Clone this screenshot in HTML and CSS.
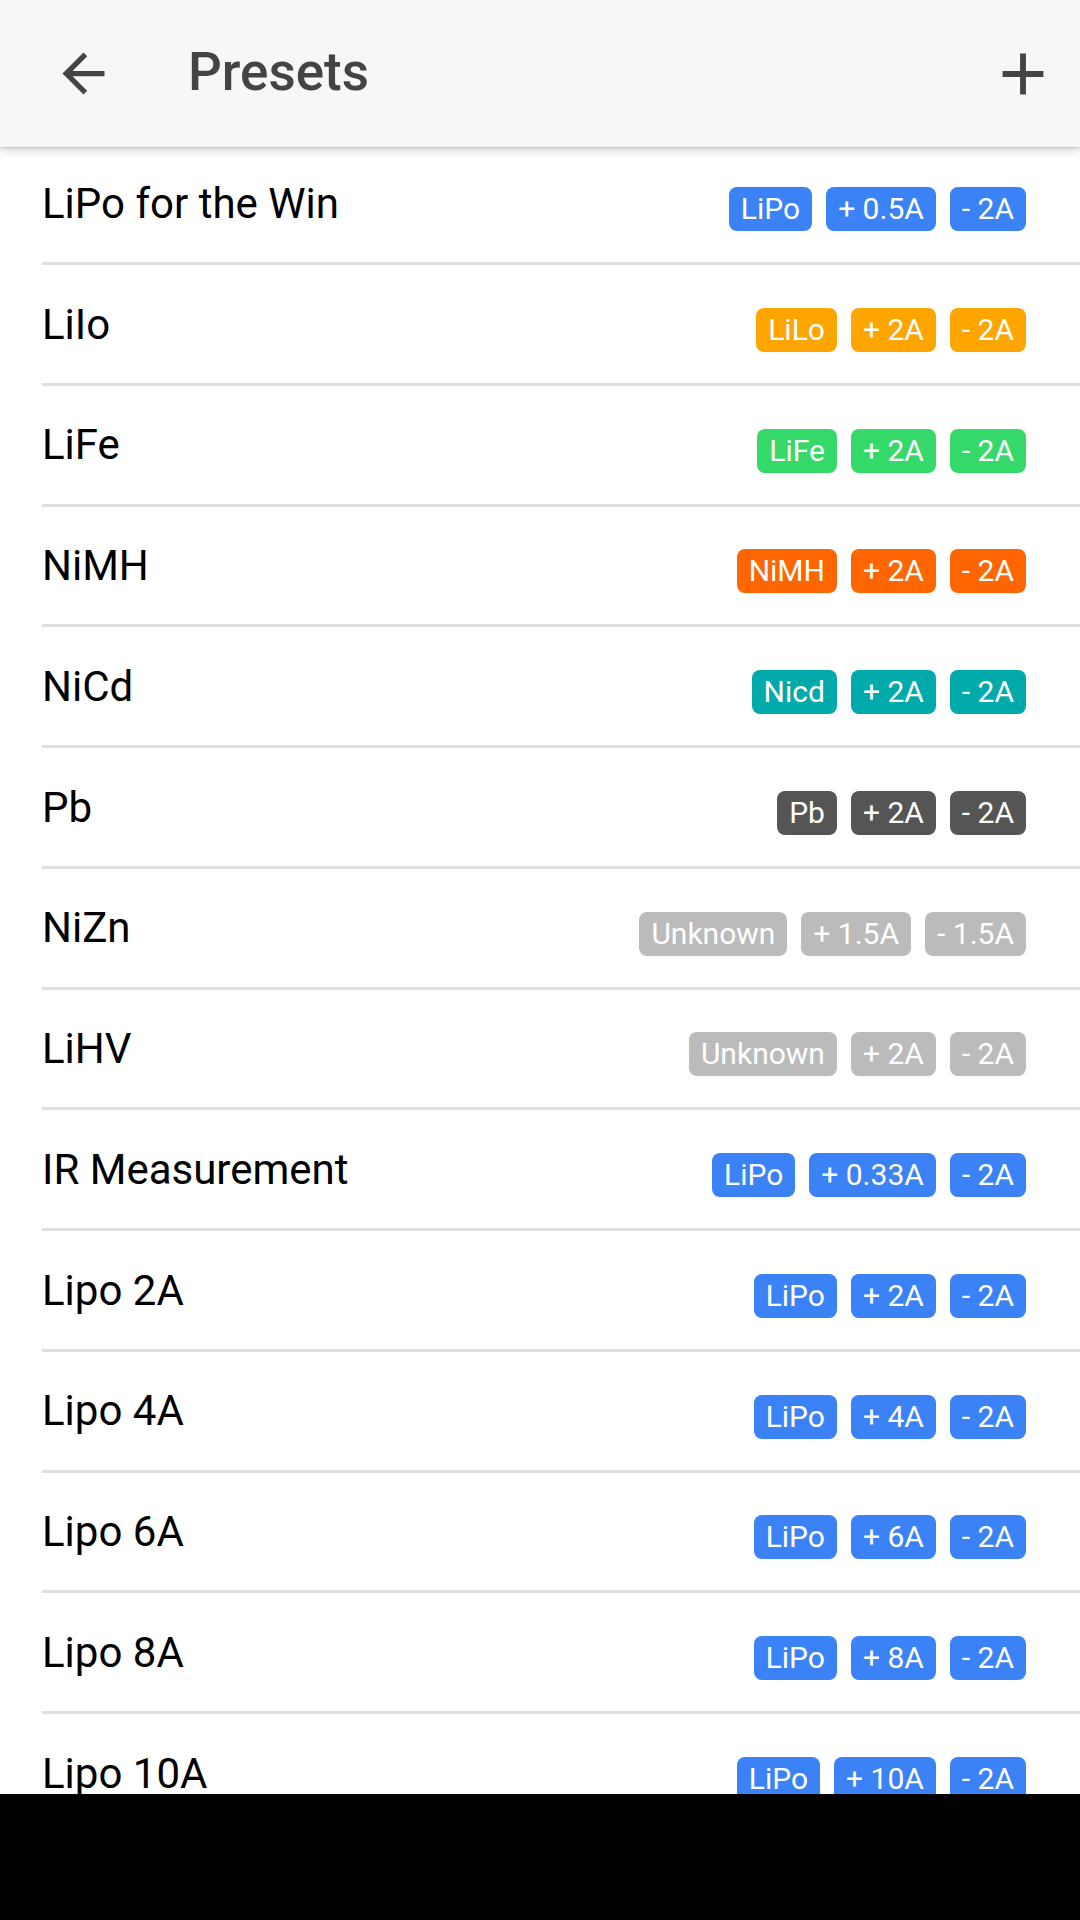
FILE: index.html
```html
<!DOCTYPE html>
<html>
<head>
<meta charset="utf-8">
<link rel="stylesheet" href="styles.css">
</head>
<body>
<div class="screen">
  <header class="toolbar">
    <svg class="icon-back" viewBox="0 0 24 24"><path d="M20 11H7.83l5.59-5.59L12 4l-8 8 8 8 1.41-1.41L7.83 13H20v-2z"/></svg>
    <h1 class="title">Presets</h1>
    <svg class="icon-add" viewBox="0 0 24 24"><path d="M13 5h-2v6H5v2h6v6h2v-6h6v-2h-6z"/></svg>
  </header>
  <main class="list">
    <div class="row"><span class="name">LiPo for the Win</span><span class="badges"><span class="badge blue">LiPo</span><span class="badge blue">+ 0.5A</span><span class="badge blue">- 2A</span></span></div>
    <div class="row"><span class="name">LiIo</span><span class="badges"><span class="badge orange">LiLo</span><span class="badge orange">+ 2A</span><span class="badge orange">- 2A</span></span></div>
    <div class="row"><span class="name">LiFe</span><span class="badges"><span class="badge green">LiFe</span><span class="badge green">+ 2A</span><span class="badge green">- 2A</span></span></div>
    <div class="row"><span class="name">NiMH</span><span class="badges"><span class="badge red">NiMH</span><span class="badge red">+ 2A</span><span class="badge red">- 2A</span></span></div>
    <div class="row"><span class="name">NiCd</span><span class="badges"><span class="badge teal">Nicd</span><span class="badge teal">+ 2A</span><span class="badge teal">- 2A</span></span></div>
    <div class="row"><span class="name">Pb</span><span class="badges"><span class="badge dark">Pb</span><span class="badge dark">+ 2A</span><span class="badge dark">- 2A</span></span></div>
    <div class="row"><span class="name">NiZn</span><span class="badges"><span class="badge grey">Unknown</span><span class="badge grey">+ 1.5A</span><span class="badge grey">- 1.5A</span></span></div>
    <div class="row"><span class="name">LiHV</span><span class="badges"><span class="badge grey">Unknown</span><span class="badge grey">+ 2A</span><span class="badge grey">- 2A</span></span></div>
    <div class="row"><span class="name">IR Measurement</span><span class="badges"><span class="badge blue">LiPo</span><span class="badge blue">+ 0.33A</span><span class="badge blue">- 2A</span></span></div>
    <div class="row"><span class="name">Lipo 2A</span><span class="badges"><span class="badge blue">LiPo</span><span class="badge blue">+ 2A</span><span class="badge blue">- 2A</span></span></div>
    <div class="row"><span class="name">Lipo 4A</span><span class="badges"><span class="badge blue">LiPo</span><span class="badge blue">+ 4A</span><span class="badge blue">- 2A</span></span></div>
    <div class="row"><span class="name">Lipo 6A</span><span class="badges"><span class="badge blue">LiPo</span><span class="badge blue">+ 6A</span><span class="badge blue">- 2A</span></span></div>
    <div class="row"><span class="name">Lipo 8A</span><span class="badges"><span class="badge blue">LiPo</span><span class="badge blue">+ 8A</span><span class="badge blue">- 2A</span></span></div>
    <div class="row"><span class="name">Lipo 10A</span><span class="badges"><span class="badge blue">LiPo</span><span class="badge blue">+ 10A</span><span class="badge blue">- 2A</span></span></div>
  </main>
  <div class="navbar"></div>
</div>
</body>
</html>
```
FILE: styles.css
```css
* { box-sizing: border-box; }
html, body { margin: 0; padding: 0; }
body {
  width: 1080px;
  height: 1920px;
  overflow: hidden;
  background: #fff;
  font-family: Roboto, "Noto Sans", "Liberation Sans", sans-serif;
}
.screen {
  display: flex;
  flex-direction: column;
  height: 1920px;
}
.toolbar {
  position: relative;
  z-index: 2;
  flex: 0 0 147px;
  height: 147px;
  background: #f7f7f7;
  display: flex;
  align-items: center;
  box-shadow: 0 3px 10px rgba(0,0,0,0.18), 0 1px 2px rgba(0,0,0,0.12);
}
.icon-back {
  width: 63px;
  height: 63px;
  margin-left: 52px;
  fill: #444;
  flex: 0 0 auto;
}
.title {
  margin: 0 0 0 73px;
  font-size: 53px;
  font-weight: 500;
  color: #444;
  flex: 1;
  line-height: 1;
  padding-bottom: 2px;
}
.icon-add {
  width: 70px;
  height: 70px;
  margin-right: 22px;
  fill: #444;
  flex: 0 0 auto;
}
.list {
  flex: 1;
  overflow: hidden;
  margin-top: -2.75px;
  position: relative;
  z-index: 1;
}
.row {
  height: 120.75px;
  margin-left: 42px;
  padding-right: 54px;
  border-bottom: 3px solid #e0e0e0;
  display: flex;
  justify-content: space-between;
  align-items: flex-start;
}
.name {
  font-size: 42px;
  line-height: 42px;
  color: #000;
  margin-top: 38.5px;
  white-space: nowrap;
}
.badges {
  display: flex;
  gap: 14px;
  margin-top: 42.75px;
}
.badge {
  height: 44px;
  line-height: 43px;
  padding: 0 12px;
  border-radius: 8px;
  font-size: 30px;
  color: #fff;
  white-space: nowrap;
}
.blue { background: #3b82f6; }
.orange { background: #ffa500; }
.green { background: #35d96a; }
.red { background: #ff6600; }
.teal { background: #00aaaa; }
.dark { background: #555555; }
.grey { background: #bbbbbb; }
.navbar {
  flex: 0 0 126px;
  height: 126px;
  background: #000;
  position: relative;
  z-index: 3;
}
```
